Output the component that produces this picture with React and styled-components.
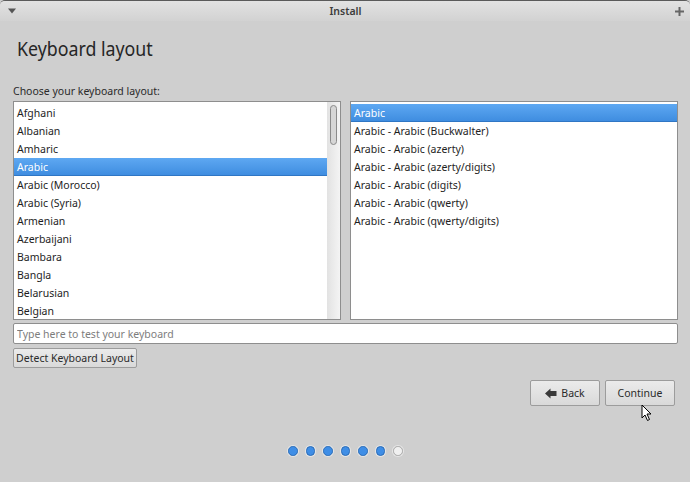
import React from "react";
import styled, { createGlobalStyle } from "styled-components";

const Global = createGlobalStyle`
  html, body { margin: 0; padding: 0; background: #cecece; }
  body { font-family: "Noto Sans", "Open Sans", sans-serif; color: #1e1e1e; }
  * { box-sizing: border-box; }
`;

const Window = styled.div`
  width: 690px;
  height: 482px;
  background: #cfcfcf;
  display: flex;
  flex-direction: column;
  border-radius: 5px 5px 0 0;
  border-top: 1px solid #5a5a5a;
  overflow: hidden;
  position: relative;
`;

const TitleBar = styled.div`
  height: 20px;
  flex: none;
  display: flex;
  align-items: center;
  justify-content: space-between;
  padding: 0 6px 0 8px;
  background: linear-gradient(#e2e2e2, #d2d2d2);
  font-size: 10.5px;
  font-weight: 600;
  color: #3c3c3c;
`;

const Content = styled.div`
  flex: 1;
  display: flex;
  flex-direction: column;
  padding: 12px 12px 0 13px;
`;

const Heading = styled.h1`
  margin: 2px 0 0 4px;
  font-weight: 400;
  font-size: 17.8px;
  transform: scaleY(1.08);
  transform-origin: left center;
  color: #262626;
  line-height: 26px;
`;

const Label = styled.div`
  margin-top: 23px;
  font-size: 10.5px;
  color: #2a2a2a;
  line-height: 14px;
`;

const Lists = styled.div`
  margin-top: 3px;
  display: flex;
  gap: 9px;
  height: 219px;
`;

const ListBox = styled.div`
  flex: 1;
  background: #fff;
  border: 1px solid #8e8e8e;
  display: flex;
  overflow: hidden;
`;

const Rows = styled.div`
  flex: 1;
  display: flex;
  flex-direction: column;
  padding-top: 2px;
`;

const Row = styled.div`
  height: 18px;
  flex: none;
  display: flex;
  align-items: center;
  padding-left: 3px;
  font-size: 10.5px;
  color: ${(p) => (p.$selected ? "#fff" : "#1e1e1e")};
  background: ${(p) =>
    p.$selected ? "linear-gradient(#5ea8f2, #3f8de0)" : "transparent"};
  border-bottom: ${(p) => (p.$selected ? "1px solid #2f76c4" : "none")};
`;

const ScrollTrack = styled.div`
  width: 13px;
  flex: none;
  background: linear-gradient(90deg, #e2e2e2, #f4f4f4);
  padding: 3px 3px;
`;

const Thumb = styled.div`
  width: 7px;
  height: 40px;
  border-radius: 4px;
  border: 1px solid #8a8a8a;
  background: #d6d6d6;
`;

const TestInput = styled.input`
  margin-top: 3px;
  width: 665px;
  height: 21px;
  border: 1px solid #8e8e8e;
  border-radius: 2px;
  background: #fff;
  font-family: inherit;
  font-size: 10.5px;
  line-height: normal;
  padding: 0 3px;
  outline: none;
  &::placeholder { color: #7d7d7d; }
`;

const Button = styled.button`
  font-family: inherit;
  font-size: 10.5px;
  color: #2a2a2a;
  border: 1px solid #9c9c9c;
  border-radius: 2px;
  background: linear-gradient(#ebebeb, #d9d9d9);
  display: flex;
  align-items: center;
  justify-content: center;
  gap: 4px;
  padding: 0;
`;

const DetectButton = styled(Button)`
  margin-top: 4px;
  width: 124px;
  height: 20px;
`;

const NavRow = styled.div`
  margin-top: 12px;
  display: flex;
  justify-content: flex-end;
  gap: 5px;
  padding-right: 3px;
  position: relative;
`;

const NavButton = styled(Button)`
  width: 70px;
  height: 26px;
`;

const Dots = styled.div`
  margin-top: 40px;
  display: flex;
  justify-content: center;
  gap: 8px;
`;

const Dot = styled.div`
  width: 9.5px;
  height: 9.5px;
  border-radius: 50%;
  background: ${(p) => (p.$on ? "#3f8ee6" : "#f0f0f0")};
  border: 1px solid ${(p) => (p.$on ? "#2a6cb8" : "#a6a6a6")};
  box-shadow: 0 0 0 1px rgba(255,255,255,0.45);
`;

const Cursor = styled.svg`
  position: absolute;
  left: 641px;
  top: 403px;
`;

const left = [
  "Afghani", "Albanian", "Amharic", "Arabic", "Arabic (Morocco)", "Arabic (Syria)",
  "Armenian", "Azerbaijani", "Bambara", "Bangla", "Belarusian", "Belgian", "Bosnian",
];
const right = [
  "Arabic", "Arabic - Arabic (Buckwalter)", "Arabic - Arabic (azerty)",
  "Arabic - Arabic (azerty/digits)", "Arabic - Arabic (digits)",
  "Arabic - Arabic (qwerty)", "Arabic - Arabic (qwerty/digits)",
];

export default function App() {
  return (
    <>
      <Global />
      <Window>
        <TitleBar>
          <svg width="8" height="6" viewBox="0 0 8 6">
            <path d="M0 0.5 H8 L4 5.5 Z" fill="#555" />
          </svg>
          <span>Install</span>
          <svg width="9" height="9" viewBox="0 0 9 9">
            <path d="M3.5 0 H5.5 V3.5 H9 V5.5 H5.5 V9 H3.5 V5.5 H0 V3.5 H3.5 Z" fill="#666" />
          </svg>
        </TitleBar>
        <Content>
          <Heading>Keyboard layout</Heading>
          <Label>Choose your keyboard layout:</Label>
          <Lists>
            <ListBox>
              <Rows>
                {left.map((t) => (
                  <Row key={t} $selected={t === "Arabic"}>{t}</Row>
                ))}
              </Rows>
              <ScrollTrack><Thumb /></ScrollTrack>
            </ListBox>
            <ListBox>
              <Rows>
                {right.map((t, i) => (
                  <Row key={t} $selected={i === 0}>{t}</Row>
                ))}
              </Rows>
            </ListBox>
          </Lists>
          <TestInput placeholder="Type here to test your keyboard" />
          <div>
            <DetectButton>Detect Keyboard Layout</DetectButton>
          </div>
          <NavRow>
            <NavButton>
              <svg width="12" height="11" viewBox="0 0 12 11">
                <path d="M0 5.5 L5.5 0.5 V3 H11.5 V8 H5.5 V10.5 Z" fill="#3a3a3a" />
              </svg>
              Back
            </NavButton>
            <NavButton>Continue</NavButton>
          </NavRow>
          <Dots>
            {[1, 1, 1, 1, 1, 1, 0].map((on, i) => (
              <Dot key={i} $on={!!on} />
            ))}
          </Dots>
        </Content>
        <Cursor width="12" height="18" viewBox="0 0 12 18">
          <path d="M1 1 V14 L4 11 L6.5 16.5 L8.5 15.5 L6 10 H10 Z" fill="#fff" stroke="#000" strokeWidth="1" strokeLinejoin="round" />
        </Cursor>
      </Window>
    </>
  );
}
